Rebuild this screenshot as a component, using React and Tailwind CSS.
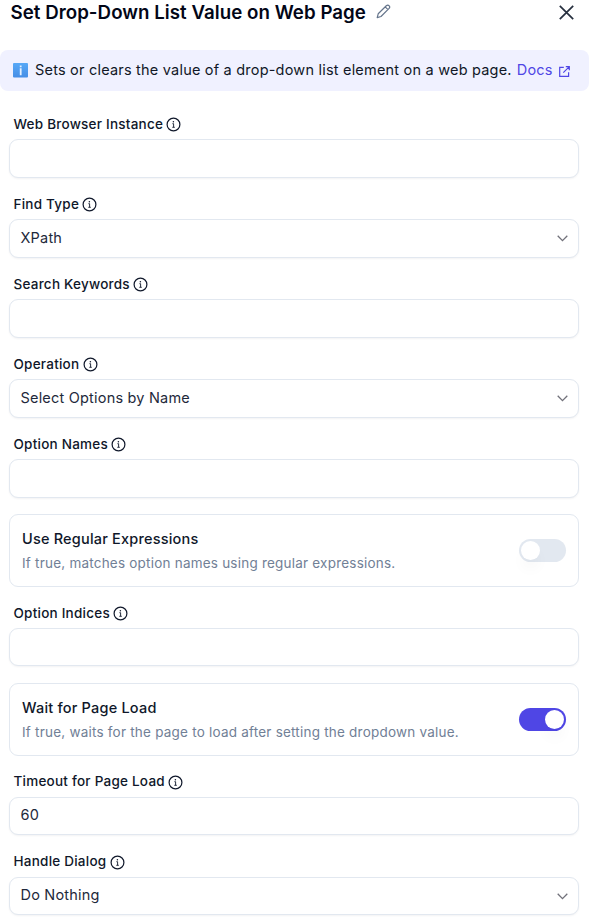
import React from 'react';

function InfoIcon() {
  return (
    <svg className="size-[15px] shrink-0" viewBox="0 0 15 15" fill="none" stroke="currentColor">
      <circle cx="7.5" cy="7.5" r="6.4" strokeWidth="1.2" />
      <path d="M6.4 6.7h1.2v3.4M6.3 10.3h2.5" strokeWidth="0.9" />
      <circle cx="7.4" cy="4.7" r="0.75" fill="currentColor" stroke="none" />
    </svg>
  );
}

function Field({ label, value, select, labelPad = 'pb-0', box = 'h-[39px]', gap = 'mt-[11px]' }) {
  return (
    <div className={gap}>
      <div className="flex h-[30px] items-center gap-[3.3px] pl-[4.5px] text-[#0f172a]">
        <span className={`text-[13.5px] leading-5 font-medium tracking-[0.235px] whitespace-nowrap ${labelPad}`}>{label}</span>
        <InfoIcon />
      </div>
      <div className={`flex items-center justify-between rounded-[9px] border border-[#e2e8f0] bg-white pr-[10px] pl-[10.5px] shadow-[0_1px_2px_rgba(15,23,42,0.05)] ${box}`}>
        <span className="pb-[2px] text-[14.5px] tracking-[0.2px] text-[#1e293b]">{value}</span>
        {select && (
          <svg className="h-[7px] w-[11px]" viewBox="0 0 11 7" fill="none" stroke="#71717a" strokeWidth="1.3">
            <path d="M0.7 0.8 5.5 5.6 10.3 0.8" />
          </svg>
        )}
      </div>
    </div>
  );
}

function ToggleCard({ title, text, on, gap }) {
  return (
    <div className={`flex h-[73px] items-center justify-between rounded-[9px] border border-[#e2e8f0] pr-3 pl-3 ${gap}`}>
      <div>
        <div className="h-6 text-[14.5px] leading-6 font-medium tracking-[0.2px] text-[#0f172a]">{title}</div>
        <div className="h-6 text-[13.5px] leading-6 tracking-[0.215px] text-[#718096]">{text}</div>
      </div>
      <div className={`flex h-[23px] w-[47px] items-center rounded-full px-[2px] ${on ? 'justify-end bg-[#4f46e5]' : 'bg-[#e2e8f0]'}`}>
        <div className="size-[19px] rounded-full bg-white shadow-[0_10px_15px_-3px_rgba(0,0,0,0.06)]" />
      </div>
    </div>
  );
}

export default function App() {
  return (
    <div className="h-[918px] w-[589px] overflow-hidden bg-white font-['Inter','Liberation_Sans',sans-serif]">
      <header className="flex h-[50px] items-start pr-[15px] pl-[10.5px]">
        <h1 className="pt-px text-[18.7px] leading-6 font-semibold tracking-[0.04px] whitespace-nowrap text-[#020617]">
          Set Drop-Down List Value on Web Page
        </h1>
        <svg className="mt-[4px] ml-[10px] size-[15px]" viewBox="0 0 15 15" fill="none" stroke="#64748b" strokeWidth="1.2" strokeLinejoin="round">
          <path d="M1.2 13.6 2.2 9.8 10.3 1.8Q11.8.4 13.2 1.8 14.3 3.1 13.1 4.4L5 12.5Z M9.2 2.9l2.8 2.8" />
        </svg>
        <svg className="mt-[5px] ml-auto size-[15px]" viewBox="0 0 15 15" fill="none" stroke="#27303f" strokeWidth="1.7">
          <path d="M.8.8 14.2 14.2M14.2.8.8 14.2" />
        </svg>
      </header>

      <div className="flex h-[41px] items-center rounded-lg bg-[#f0f1ff] pb-[2px] pl-[13px] text-[14.5px] whitespace-nowrap text-[#111827]">
        <svg className="mt-[2px] mr-[7px] size-[15px]" viewBox="0 0 15 15">
          <defs>
            <linearGradient id="info" x1="0" y1="0" x2="0" y2="1">
              <stop offset="0" stopColor="#58a9f7" />
              <stop offset="1" stopColor="#468ee6" />
            </linearGradient>
          </defs>
          <rect width="15" height="14.5" rx="1" fill="url(#info)" />
          <path d="M6.8 2.5h1.8v1.7H6.8zM6.8 5.3h1.8v7H6.8z" fill="#e4f0ff" />
        </svg>
        <span className="tracking-[0.205px]">Sets or clears the value of a drop-down list element on a web page.</span>
        <a className="ml-[5px] tracking-[0.2px] text-[#4f46e5]">Docs</a>
        <svg className="mt-[3px] ml-[6px] size-[11px]" viewBox="0 0 11 11" fill="none" stroke="#4f46e5" strokeWidth="1.2">
          <path d="M4.8 1.4H.7v8.9h8.9V6.2M6.8.7h3.5v3.5M10.3.7 4.3 6.7" />
        </svg>
      </div>

      <main className="flex flex-col pr-[10px] pl-[9px]">
        <Field label="Web Browser Instance" gap="mt-[18px]" />
        <Field label="Find Type" value="XPath" select />
        <Field label="Search Keywords" />
        <Field label="Operation" value="Select Options by Name" select />
        <Field label="Option Names" />
        <ToggleCard title="Use Regular Expressions" text="If true, matches option names using regular expressions." gap="mt-4" />
        <Field label="Option Indices" box="h-[38px]" />
        <ToggleCard title="Wait for Page Load" text="If true, waits for the page to load after setting the dropdown value." on gap="mt-[17px]" />
        <Field label="Timeout for Page Load" value="60" box="h-[38px]" labelPad="pb-[2px]" />
        <Field label="Handle Dialog" value="Do Nothing" select box="h-[38px]" gap="mt-[12px]" labelPad="pb-[2px]" />
      </main>
    </div>
  );
}
